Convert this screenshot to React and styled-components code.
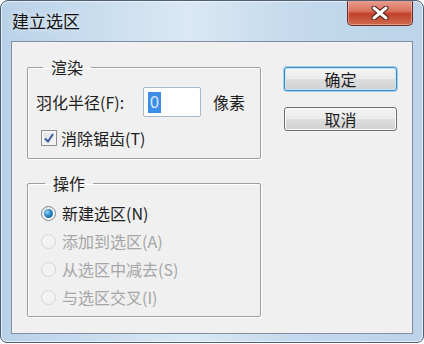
import React from "react";
import styled, { createGlobalStyle } from "styled-components";

const GlobalStyle = createGlobalStyle`
  html, body { margin: 0; padding: 0; background: #ffffff; }
  body { font-family: "Noto Sans CJK SC", "Noto Sans", sans-serif; }
  * { box-sizing: border-box; }
`;

const Window = styled.div`
  width: 424px;
  height: 343px;
  border: 1px solid #4e5f73;
  border-radius: 8px 8px 7px 7px;
  background: linear-gradient(to right, #b9d1e8 0%, #cfe1f1 30%, #d9e8f4 45%, #c4d9ec 70%, #bcd3e9 100%);
  box-shadow: inset 0 0 0 1px rgba(255,255,255,0.6);
  display: flex;
  flex-direction: column;
  overflow: hidden;
`;

const TitleBar = styled.div`
  height: 40px;
  display: flex;
  justify-content: space-between;
  padding: 0 10px 0 11px;
`;

const Title = styled.div`
  align-self: center;
  font-size: 17px;
  line-height: 20px;
  color: #111111;
  text-shadow: 0 0 6px rgba(255,255,255,0.9);
`;

const CloseButton = styled.div`
  width: 66px;
  height: 26px;
  margin-top: -1px;
  border: 1px solid #6b2a22;
  border-top: none;
  border-radius: 0 0 5px 5px;
  background: linear-gradient(to bottom, #e8a294 0%, #d9705d 45%, #c2402a 55%, #cf6a4f 100%);
  box-shadow: inset 0 0 0 1px rgba(255,255,255,0.35);
  display: flex;
  align-items: center;
  justify-content: center;
`;

const Panel = styled.div`
  margin: 0 10px;
  height: 293px;
  border: 1px solid #7f8ea0;
  background: #f0f0f0;
  display: flex;
  padding: 0 15px 0 15px;
`;

const LeftCol = styled.div`
  width: 234px;
  display: flex;
  flex-direction: column;
`;

const Group = styled.fieldset`
  margin: ${(p) => p.$top}px 0 0 0;
  padding: ${(p) => p.$pad};
  border: 1px solid #9d9d9d;
  border-radius: 2px;
  box-shadow: 1px 1px 0 #ffffff, inset 1px 1px 0 #ffffff;
  min-width: 0;
  display: flex;
  flex-direction: column;
`;

const Legend = styled.legend`
  margin-left: ${(p) => p.$left}px;
  padding: 0 8px 0 8px;
  font-size: 16px;
  line-height: 20px;
  color: #1e1e1e;
`;

const Row = styled.div`
  display: flex;
  align-items: center;
  height: ${(p) => p.$h}px;
  margin-top: ${(p) => p.$mt || 0}px;
  font-size: 16px;
  color: ${(p) => (p.$disabled ? "#a6a6a6" : "#1e1e1e")};
`;

const FieldLabel = styled.span`
  width: 107px;
  white-space: nowrap;
`;

const TextInput = styled.div`
  width: 58px;
  height: 30px;
  border: 1px solid #a7b8c9;
  border-radius: 2px;
  background: #ffffff;
  display: flex;
  align-items: center;
  padding-left: 4px;
`;

const Selected = styled.span`
  background: #3d8ee6;
  color: #dfe9f5;
  font-family: "Liberation Sans", sans-serif;
  font-size: 16px;
  line-height: 21px;
  padding: 0 2px;
`;

const Unit = styled.span`
  margin-left: 12px;
`;

const CheckBox = styled.span`
  width: 16px;
  height: 16px;
  margin-left: 5px;
  margin-right: 4px;
  border: 1px solid #8e8f8f;
  background: linear-gradient(135deg, #dcdcdc, #f6f6f6);
  box-shadow: inset 0 0 0 2px #f4f4f4;
  display: flex;
  align-items: center;
  justify-content: center;
`;

const Radio = styled.span`
  width: 15px;
  height: 15px;
  margin-left: 5px;
  margin-right: 6px;
  border-radius: 50%;
  border: 1px solid ${(p) => (p.$disabled ? "#d4d4d4" : "#7e8690")};
  background: ${(p) => (p.$disabled ? "#f3f3f3" : "linear-gradient(135deg, #e6e6e6, #ffffff)")};
  display: flex;
  align-items: center;
  justify-content: center;
  flex: none;
`;

const RadioDot = styled.span`
  width: 9px;
  height: 9px;
  border-radius: 50%;
  background: radial-gradient(circle at 35% 35%, #9fd3f5 0%, #2a88c8 45%, #0d4f86 100%);
`;

const RightCol = styled.div`
  margin-left: auto;
  padding-top: 25px;
  display: flex;
  flex-direction: column;
  gap: 16px;
`;

const Button = styled.div`
  width: 113px;
  height: 24px;
  border: 1px solid ${(p) => (p.$primary ? "#3c8ac4" : "#707070")};
  border-radius: 3px;
  background: linear-gradient(to bottom, #f4f4f4 0%, #ebebeb 48%, #dddddd 52%, #d2d2d2 100%);
  box-shadow: ${(p) => (p.$primary ? "0 0 0 1px #9fd0ef, inset 0 0 0 1px #c9e6f8" : "inset 0 0 0 1px #fbfbfb")};
  display: flex;
  align-items: center;
  justify-content: center;
  font-size: 16px;
  color: #1e1e1e;
`;

const radios = [
  { label: "新建选区(N)", checked: true },
  { label: "添加到选区(A)", disabled: true },
  { label: "从选区中减去(S)", disabled: true },
  { label: "与选区交叉(I)", disabled: true },
];

export default function App() {
  return (
    <>
      <GlobalStyle />
      <Window>
        <TitleBar>
          <Title>建立选区</Title>
          <CloseButton>
            <svg width="18" height="14" viewBox="0 0 18 14">
              <path d="M3 2 L15 12 M15 2 L3 12" stroke="#4a1810" strokeWidth="5" strokeLinecap="round" />
              <path d="M3 2 L15 12 M15 2 L3 12" stroke="#ffffff" strokeWidth="3" strokeLinecap="round" />
            </svg>
          </CloseButton>
        </TitleBar>
        <Panel>
          <LeftCol>
            <Group $top={15} $pad="10px 8px 10px 8px">
              <Legend $left={7}>渲染</Legend>
              <Row $h={30}>
                <FieldLabel>羽化半径(F):</FieldLabel>
                <TextInput>
                  <Selected>0</Selected>
                </TextInput>
                <Unit>像素</Unit>
              </Row>
              <Row $h={20} $mt={11}>
                <CheckBox>
                  <svg width="12" height="12" viewBox="0 0 12 12">
                    <path d="M2 6.5 L5 9.5 L10 2" fill="none" stroke="#3b5ca0" strokeWidth="2" />
                  </svg>
                </CheckBox>
                消除锯齿(T)
              </Row>
            </Group>
            <Group $top={14} $pad="6px 8px 5px 8px">
              <Legend $left={9}>操作</Legend>
              {radios.map((r) => (
                <Row key={r.label} $h={28} $disabled={r.disabled}>
                  <Radio $disabled={r.disabled}>{r.checked && <RadioDot />}</Radio>
                  {r.label}
                </Row>
              ))}
            </Group>
          </LeftCol>
          <RightCol>
            <Button $primary>确定</Button>
            <Button>取消</Button>
          </RightCol>
        </Panel>
      </Window>
    </>
  );
}
